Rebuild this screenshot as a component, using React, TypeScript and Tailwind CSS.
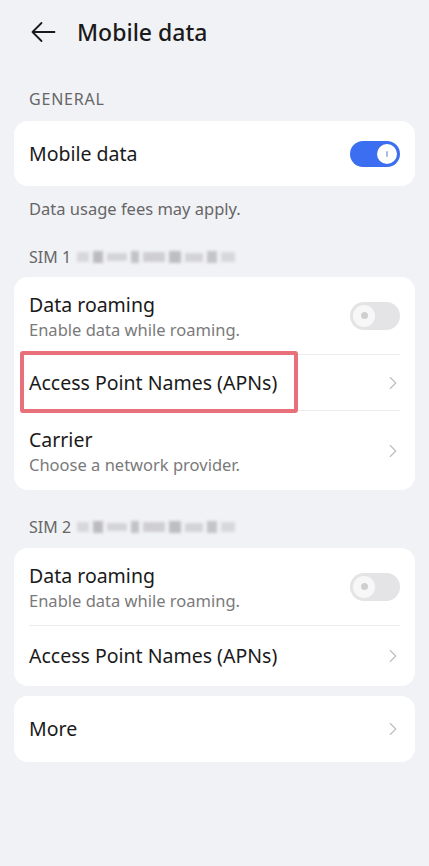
import { ChevronRight } from "lucide-react"

const font = { fontFamily: "'Noto Sans', 'Liberation Sans', sans-serif" }

function Toggle({ on }: { on?: boolean }) {
  if (on) {
    return (
      <div className="flex h-[26px] w-[50px] items-center justify-end rounded-full bg-[#3b6ef0] pr-[3px]">
        <div className="flex h-[20px] w-[20px] items-center justify-center rounded-full bg-white">
          <div className="h-[6px] w-[2px] rounded-full bg-[#aab8e8]" />
        </div>
      </div>
    )
  }
  return (
    <div className="flex h-[28px] w-[50px] items-center rounded-full bg-[#e4e4e6] pl-[3px]">
      <div className="flex h-[22px] w-[22px] items-center justify-center rounded-full bg-[#f7f7f7]">
        <div className="h-[7px] w-[7px] rounded-full bg-[#cfcfcf]" />
      </div>
    </div>
  )
}

function Chevron() {
  return <ChevronRight size={22} strokeWidth={1.2} className="-mr-[4px] text-[#bdbdbd]" />
}

// masked SIM operator / number
function Blurred() {
  return (
    <div className="ml-[6px] flex h-[14px] items-center gap-[4px] blur-[1.5px]">
      <div className="h-[10px] w-[12px] bg-[#d8d8dc]" />
      <div className="h-[12px] w-[10px] bg-[#bcbcc0]" />
      <div className="h-[8px] w-[20px] bg-[#d4d4d8]" />
      <div className="h-[12px] w-[8px] bg-[#c2c2c6]" />
      <div className="h-[10px] w-[22px] bg-[#cfcfd3]" />
      <div className="h-[12px] w-[12px] bg-[#bebec2]" />
      <div className="h-[9px] w-[18px] bg-[#d4d4d8]" />
      <div className="h-[12px] w-[10px] bg-[#c4c4c8]" />
      <div className="h-[10px] w-[14px] bg-[#d8d8dc]" />
    </div>
  )
}

function RoamingRow() {
  return (
    <div className="flex h-[77px] items-center justify-between">
      <div className="flex flex-col">
        <span className="text-[19.5px] leading-[27px] text-[#1a1a1a]">Data roaming</span>
        <span className="text-[16.5px] leading-[23px] text-[#7a7a7a]">Enable data while roaming.</span>
      </div>
      <Toggle />
    </div>
  )
}

export default function App() {
  return (
    <div className="min-h-[866px] w-[429px] bg-[#f1f2f6]" style={font}>
      <div className="flex h-[62px] items-center pl-[31px] pt-[2px]">
        <svg width="25" height="22" viewBox="0 0 25 22" fill="none" stroke="#1a1a1a" strokeWidth="1.8" strokeLinecap="round" strokeLinejoin="round">
          <path d="M23.5 11H1.5M10.5 2L1.5 11l9 9" />
        </svg>
        <span className="ml-[21px] text-[23px] font-medium text-[#1a1a1a]">Mobile data</span>
      </div>

      <div className="px-[14px]">
        <div className="flex h-[59px] items-end pb-[10px] pl-[15px] text-[16px] tracking-[0.8px] text-[#666]">GENERAL</div>
        <div className="flex h-[65px] items-center justify-between rounded-[14px] bg-white px-[15px]">
          <span className="text-[19.5px] text-[#1a1a1a]">Mobile data</span>
          <Toggle on />
        </div>
        <div className="flex h-[47px] items-center pl-[15px] text-[16.5px] text-[#666]">Data usage fees may apply.</div>

        <div className="flex h-[44px] items-center pl-[15px] pt-[4px] text-[16px] text-[#666]">
          SIM 1<Blurred />
        </div>
        <div className="rounded-[14px] bg-white px-[15px]">
          <RoamingRow />
          <div className="relative flex h-[57px] items-center justify-between border-y border-[#ececec]">
            <div className="absolute -left-[9px] top-[-4px] h-[62px] w-[278px] rounded-[3px] border-[4px] border-[#e8707a]" />
            <span className="text-[19.5px] text-[#1a1a1a]">Access Point Names (APNs)</span>
            <Chevron />
          </div>
          <div className="flex h-[79px] items-center justify-between">
            <div className="flex flex-col">
              <span className="text-[19.5px] leading-[27px] text-[#1a1a1a]">Carrier</span>
              <span className="text-[16.5px] leading-[23px] text-[#7a7a7a]">Choose a network provider.</span>
            </div>
            <Chevron />
          </div>
        </div>

        <div className="flex h-[58px] items-center pl-[15px] pt-[16px] text-[16px] text-[#666]">
          SIM 2<Blurred />
        </div>
        <div className="rounded-[14px] bg-white px-[15px]">
          <RoamingRow />
          <div className="flex h-[61px] items-center justify-between border-t border-[#ececec]">
            <span className="text-[19.5px] text-[#1a1a1a]">Access Point Names (APNs)</span>
            <Chevron />
          </div>
        </div>

        <div className="mt-[10px] flex h-[66px] items-center justify-between rounded-[14px] bg-white px-[15px]">
          <span className="text-[19.5px] text-[#1a1a1a]">More</span>
          <Chevron />
        </div>
      </div>
    </div>
  )
}
